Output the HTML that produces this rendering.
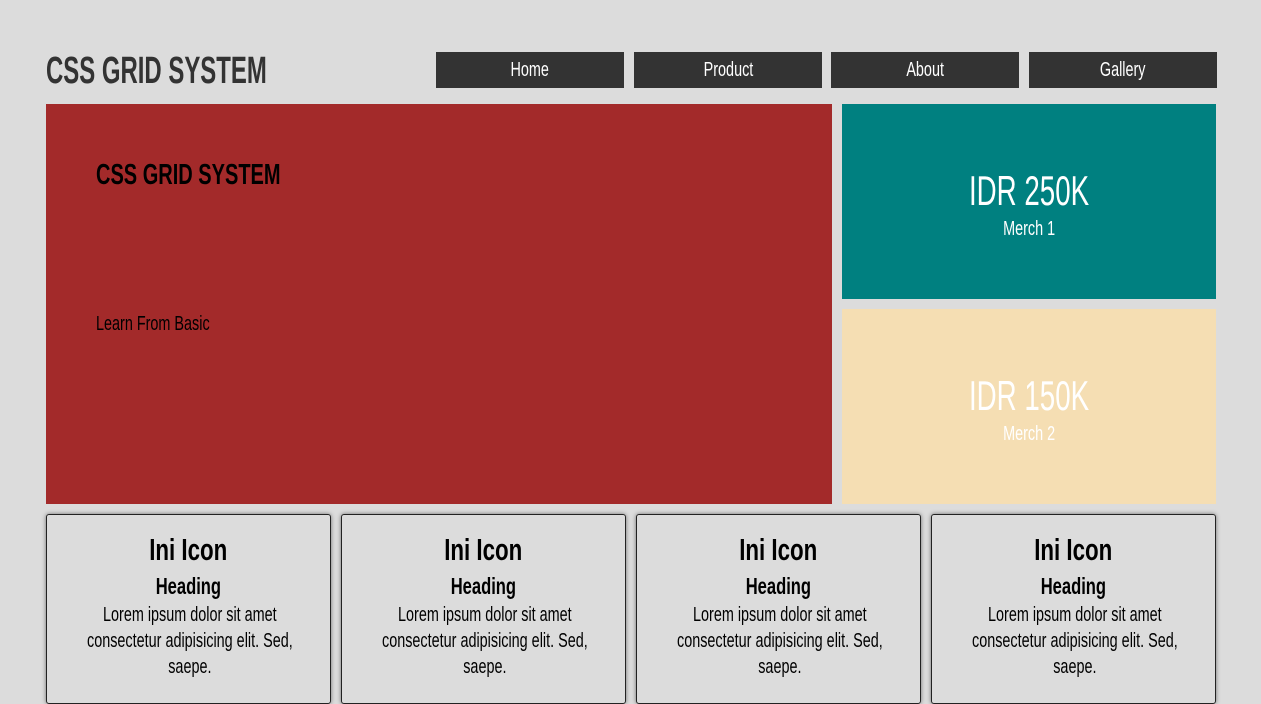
<!DOCTYPE html>
<html><head><style>
*{margin:0;padding:0;box-sizing:border-box}
body{width:1261px;height:686px;overflow:hidden;background:#dcdcdc;font-family:"Liberation Sans",sans-serif;position:relative}
.a{position:absolute}
.n{display:inline-block;transform:scaleX(.72);white-space:nowrap}
.logo{left:46px;top:50px;font-size:38px;font-weight:bold;color:#333;transform:scaleX(.63);transform-origin:left;white-space:nowrap}
.nav{top:52px;height:36px;width:188px;background:#333;color:#fff;font-size:20px;text-align:center;line-height:36px}
.hero{left:46px;top:104px;width:786px;height:400px;background:#a32a2a}
.m{left:842px;width:374px;text-align:center;color:#fff}
.price{font-size:42px;font-weight:300;line-height:48px}
.sub{font-size:20px;line-height:24px;margin-top:2px}
.card{top:514px;width:285px;height:190px;border:1px solid #222;border-radius:3px;box-shadow:0 0 4px rgba(0,0,0,.5);text-align:center;color:#000}
.card .t{position:absolute;left:0;right:0;top:17px;font-size:31px;font-weight:bold;line-height:36px}
.card .h{position:absolute;left:0;right:0;top:57px;font-size:23px;font-weight:bold;line-height:28px}
.card .p{position:absolute;left:0;right:0;top:87px;font-size:20px;line-height:26px}
</style></head><body>
<div class="a logo">CSS GRID SYSTEM</div>
<div class="a nav" style="left:436px"><span class="n">Home</span></div>
<div class="a nav" style="left:634px"><span class="n">Product</span></div>
<div class="a nav" style="left:831px"><span class="n">About</span></div>
<div class="a nav" style="left:1029px"><span class="n">Gallery</span></div>
<div class="a hero">
<div class="a" style="left:50px;top:55px;font-size:29px;font-weight:bold;transform:scaleX(.69);transform-origin:left;white-space:nowrap">CSS GRID SYSTEM</div>
<div class="a" style="left:50px;top:209px;font-size:20px;transform:scaleX(.72);transform-origin:left;white-space:nowrap">Learn From Basic</div>
</div>
<div class="a m" style="top:104px;height:195px;background:#008080"><div class="price" style="margin-top:63px"><span class="n" style="transform:scaleX(.66)">IDR 250K</span></div><div class="sub"><span class="n">Merch 1</span></div></div>
<div class="a m" style="top:309px;height:195px;background:#f5deb3"><div class="price" style="margin-top:63px"><span class="n" style="transform:scaleX(.66)">IDR 150K</span></div><div class="sub"><span class="n">Merch 2</span></div></div>
<div class="a card" style="left:46px"><div class="t"><span class="n">Ini Icon</span></div><div class="h"><span class="n">Heading</span></div><div class="p"><span class="n">Lorem ipsum dolor sit amet<br>consectetur adipisicing elit. Sed,<br>saepe.</span></div></div>
<div class="a card" style="left:341px"><div class="t"><span class="n">Ini Icon</span></div><div class="h"><span class="n">Heading</span></div><div class="p"><span class="n">Lorem ipsum dolor sit amet<br>consectetur adipisicing elit. Sed,<br>saepe.</span></div></div>
<div class="a card" style="left:636px"><div class="t"><span class="n">Ini Icon</span></div><div class="h"><span class="n">Heading</span></div><div class="p"><span class="n">Lorem ipsum dolor sit amet<br>consectetur adipisicing elit. Sed,<br>saepe.</span></div></div>
<div class="a card" style="left:931px"><div class="t"><span class="n">Ini Icon</span></div><div class="h"><span class="n">Heading</span></div><div class="p"><span class="n">Lorem ipsum dolor sit amet<br>consectetur adipisicing elit. Sed,<br>saepe.</span></div></div>
</body></html>
